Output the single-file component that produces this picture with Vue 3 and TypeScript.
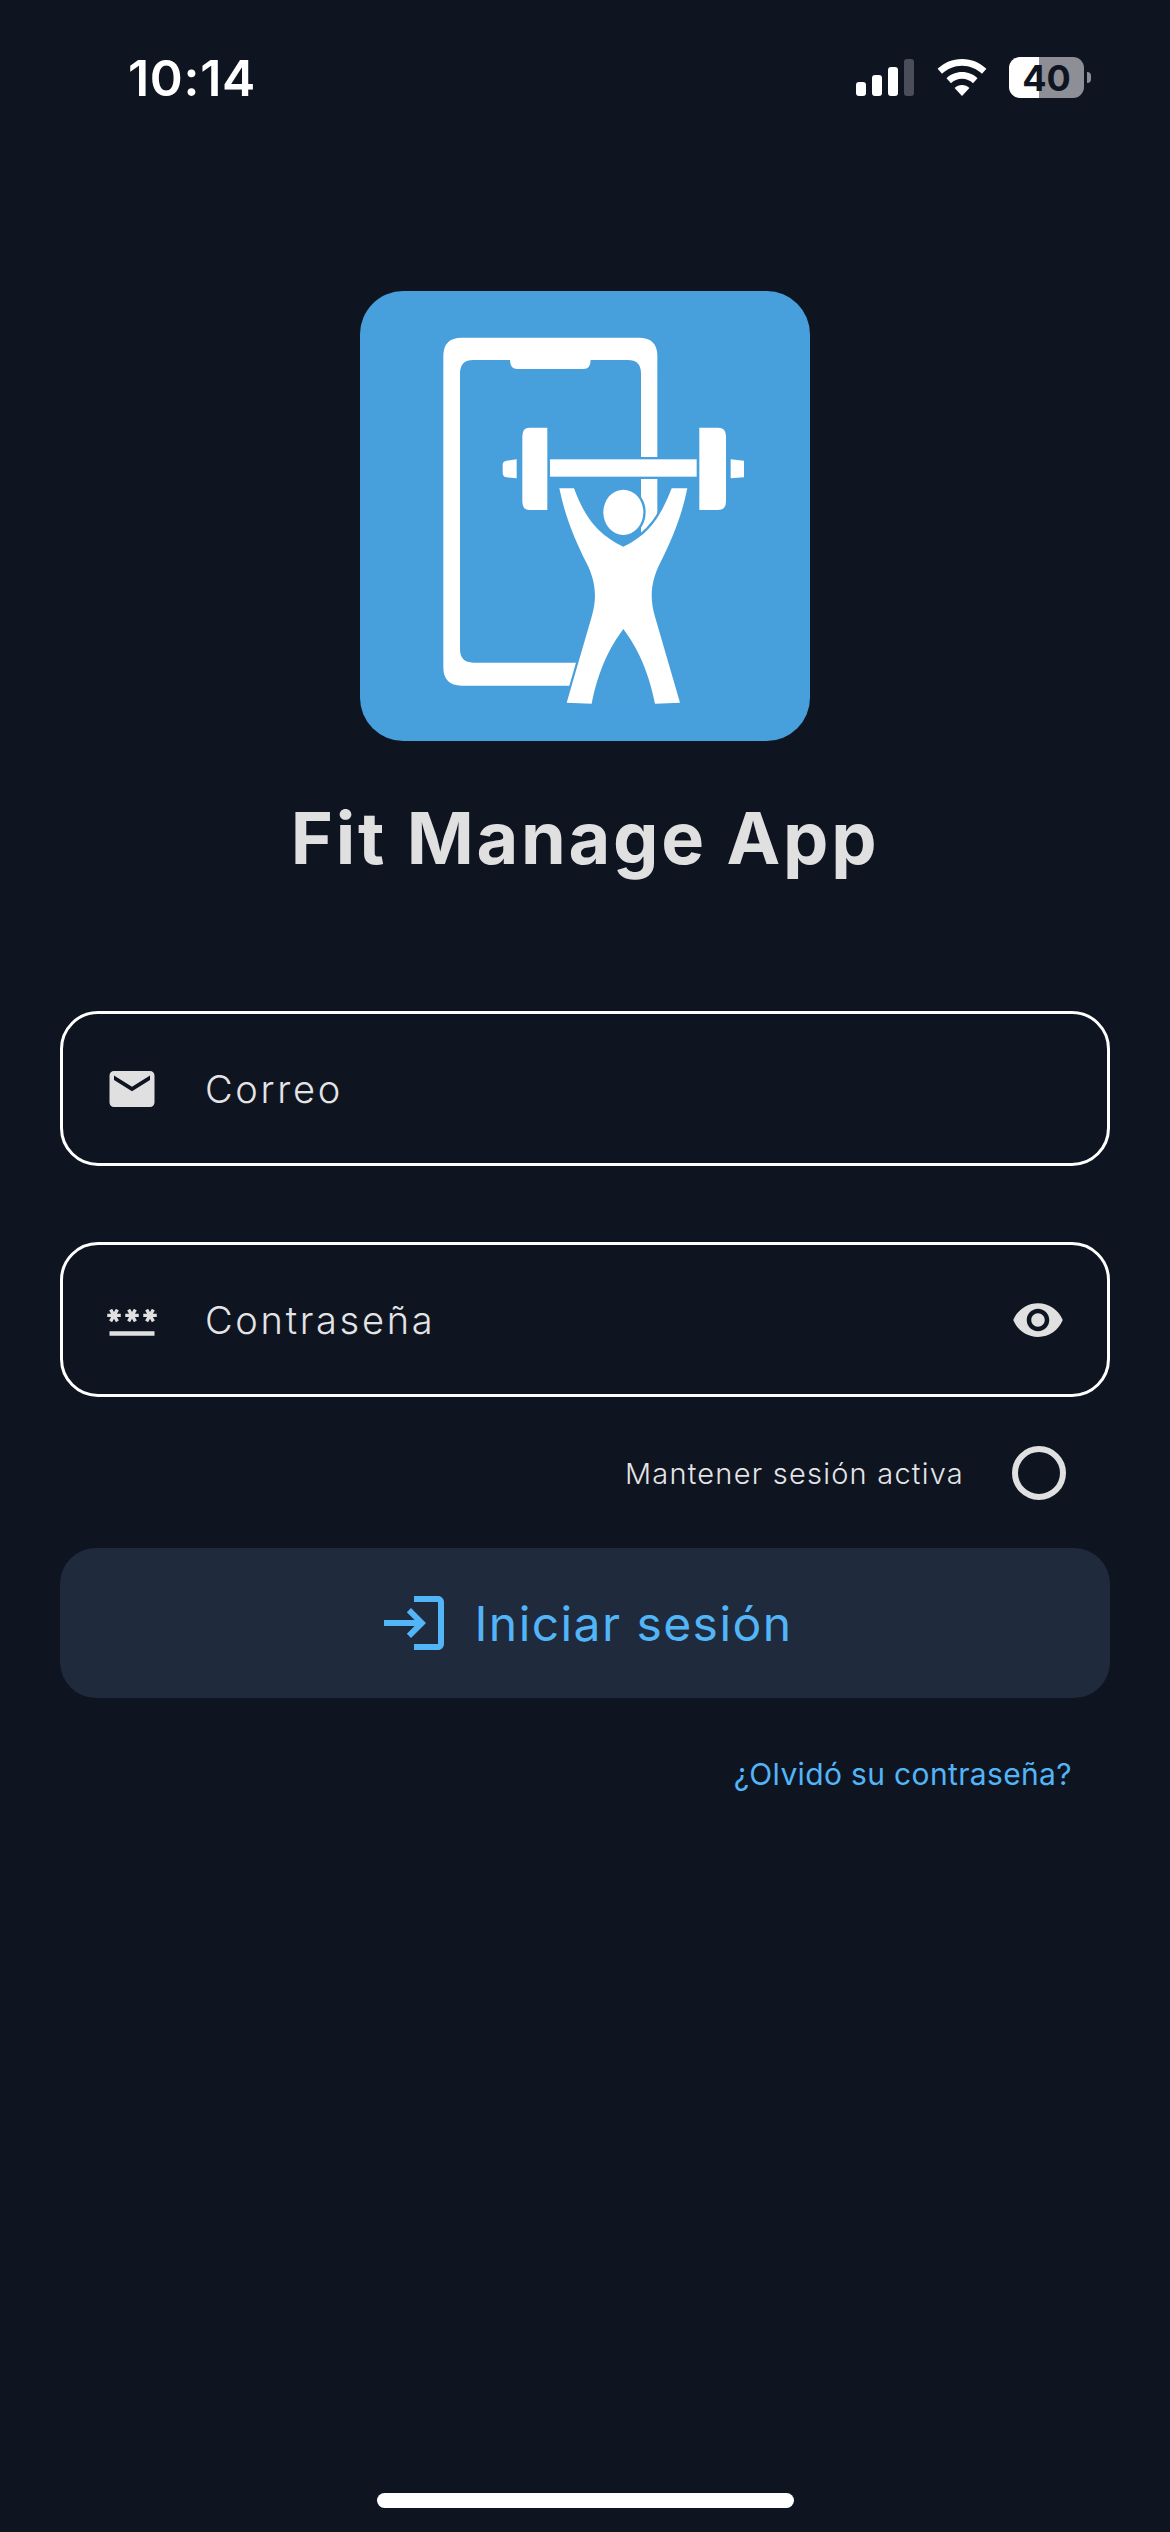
<script setup lang="ts">
const signalBars: number[] = [14, 21, 29, 37]
</script>

<template>
  <div class="page">
    <header class="status">
      <span class="time">10:14</span>
      <div class="status-icons">
        <div class="signal">
          <i v-for="(h, idx) in signalBars" :key="h" :class="{ dim: idx === 3 }" :style="{ height: h + 'px' }"></i>
        </div>
        <svg class="wifi" width="50" height="37" viewBox="0 0 50 37">
          <path d="M25 0C15.500 0 7 3.700.6 9.800l4.400 5C10.300 9.800 17.300 6.800 25 6.800s14.700 3 20 8l4.400-5C43 3.700 34.500 0 25 0z" fill="#fff"/>
          <path d="M25 13c-6 0-11.400 2.300-15.500 6.200l4.500 5c2.900-2.700 6.800-4.400 11-4.400s8.100 1.700 11 4.400l4.500-5C36.400 15.300 31 13 25 13z" fill="#fff"/>
          <path d="M25 26c-2.900 0-5.500 1.100-7.400 3L25 37l7.400-8c-1.900-1.900-4.500-3-7.400-3z" fill="#fff"/>
        </svg>
        <div class="battery">
          <div class="cell"><span>40</span></div>
          <div class="nub"></div>
        </div>
      </div>
    </header>

    <div class="logo">
      <svg width="450" height="450" viewBox="60 63 1350 1350">
        <rect x="60" y="63" width="1350" height="1350" rx="130" fill="#479fdc"/>
        <path fill="#fff" fill-rule="evenodd" d="M365 203H897Q952 203 952 258V1192Q952 1247 897 1247H365Q310 1247 310 1192V258Q310 203 365 203ZM400 270Q360 270 360 310V1138Q360 1178 400 1178H863Q903 1178 903 1138V310Q903 270 863 270H752Q752 297 730 297H532Q510 297 510 270Z"/>
        <rect x="900" y="790" width="60" height="330" fill="#479fdc"/>
        <path d="M915 1247H970V1150H880Q895 1178 915 1247Z" fill="#479fdc"/>
        <g fill="#479fdc" stroke="#479fdc" stroke-width="14" stroke-linejoin="round">
          <rect x="547" y="473" width="75" height="247"/>
          <rect x="630" y="568" width="440" height="52"/>
          <rect x="1078" y="473" width="80" height="247"/>
          <path d="M658 655H702C730 730 765 790 850 830C935 790 965 730 995 655H1042C1025 740 995 810 960 880C930 940 930 990 945 1040L1020 1300H680L755 1040C770 990 770 940 740 880C705 810 675 740 658 655Z"/>
          <ellipse cx="850" cy="727" rx="60" ry="68"/>
        </g>
        <g fill="#fff">
          <path d="M568 473H622V720H568Q547 720 547 695V498Q547 473 568 473Z"/>
          <rect x="630" y="568" width="440" height="52"/>
          <path d="M1078 473H1134Q1158 473 1158 498V695Q1158 720 1134 720H1078Z"/>
          <path d="M530 568V625L500 622Q488 620 488 608V585Q488 573 500 572Z"/>
          <path d="M1172 568L1212 572V622L1172 625Z"/>
          <path d="M658 655H702C730 730 765 790 850 830C935 790 965 730 995 655H1042C1025 740 995 810 960 880C930 940 930 990 945 1040L1020 1298L945 1301C925 1200 890 1130 850 1077C810 1130 775 1200 755 1301L680 1298L755 1040C770 990 770 940 740 880C705 810 675 740 658 655Z"/>
          <ellipse cx="850" cy="727" rx="60" ry="68"/>
        </g>
      </svg>
    </div>

    <h1 class="title">Fit Manage App</h1>

    <div class="form">
      <div class="field">
        <svg class="icon" width="54" height="54" viewBox="0 0 24 24">
          <path d="M20 4H4c-1.100 0-1.990.9-1.990 2L2 18c0 1.100.9 2 2 2h16c1.100 0 2-.9 2-2V6c0-1.100-.9-2-2-2zm0 4l-8 5-8-5V6l8 5 8-5v2z"/>
        </svg>
        <span class="label">Correo</span>
      </div>
      <div class="field second">
        <svg class="icon" width="54" height="54" viewBox="0 0 24 24">
          <path d="M2 17h20v2H2v-2zm1.150-4.050L4 11.470l.85 1.480 1.300-.75-.85-1.480H7v-1.500H5.300l.85-1.470L4.850 7 4 8.470 3.150 7l-1.300.75.85 1.470H1v1.500h1.700l-.85 1.480 1.300.75zm6.700-.75 1.300.75.85-1.480.85 1.480 1.300-.75-.85-1.480H15v-1.500h-1.700l.85-1.470-1.300-.75L12 8.470 11.150 7l-1.300.75.85 1.470H9v1.500h1.700l-.85 1.480zM23 9.220h-1.700l.85-1.470-1.300-.75L20 8.470 19.150 7l-1.300.75.85 1.470H17v1.500h1.700l-.85 1.480 1.300.75.85-1.480.85 1.480 1.300-.75-.85-1.480H23v-1.500z"/>
        </svg>
        <span class="label">Contraseña</span>
        <svg class="icon eye" width="54" height="54" viewBox="0 0 24 24">
          <path d="M12 4.500C7 4.500 2.730 7.610 1 12c1.730 4.390 6 7.500 11 7.500s9.270-3.110 11-7.500c-1.730-4.390-6-7.500-11-7.500zM12 17c-2.760 0-5-2.240-5-5s2.240-5 5-5 5 2.240 5 5-2.240 5-5 5zm0-8c-1.660 0-3 1.340-3 3s1.340 3 3 3 3-1.340 3-3-1.340-3-3-3z"/>
        </svg>
      </div>

      <div class="keep">
        <span>Mantener sesión activa</span>
        <div class="radio"></div>
      </div>

      <button class="submit" type="button">
        <svg width="72" height="72" viewBox="0 0 24 24">
          <path d="M11 7L9.600 8.400l2.600 2.600H2v2h10.200l-2.600 2.600L11 17l5-5-5-5zm9 12h-8v2h8c1.100 0 2-.9 2-2V5c0-1.100-.9-2-2-2h-8v2h8v14z"/>
        </svg>
        <span>Iniciar sesión</span>
      </button>

      <a class="forgot">¿Olvidó su contraseña?</a>
    </div>

    <div class="home"></div>
  </div>
</template>

<style scoped>
.page {
  width: 1170px;
  height: 2532px;
  background: #0f1421;
  display: flex;
  flex-direction: column;
  align-items: center;
  font-family: Inter, "Noto Sans", sans-serif;
  color: #e0e0e0;
  overflow: hidden;
}
.status {
  width: 100%;
  box-sizing: border-box;
  height: 154px;
  padding: 57px 79px 0 128px;
  display: flex;
  justify-content: space-between;
  align-items: flex-start;
}
.time {
  font-size: 50px;
  font-weight: 600;
  line-height: 42px;
  color: #fff;
  letter-spacing: 0.7px;
}
.status-icons {
  display: flex;
  align-items: center;
  height: 41px;
}
.signal {
  display: flex;
  align-items: flex-end;
  gap: 6px;
  height: 37px;
  margin-right: 23px;
}
.signal i {
  display: block;
  width: 10px;
  border-radius: 3px;
  background: #fff;
}
.signal i.dim {
  background: #4a4e5a;
}
.wifi {
  margin-right: 22px;
}
.battery {
  display: flex;
  align-items: center;
  gap: 3px;
}
.cell {
  width: 75px;
  height: 41px;
  border-radius: 11px;
  background: linear-gradient(90deg, #fff 0 40%, #8e8f96 40% 100%);
  display: flex;
  align-items: center;
  justify-content: center;
  font-size: 36px;
  font-weight: 700;
  color: #0f1421;
  line-height: 1;
}
.nub {
  width: 4px;
  height: 11px;
  border-radius: 0 6px 6px 0;
  background: #8e8f96;
}
.logo {
  margin-top: 137px;
  height: 450px;
  width: 450px;
  display: block;
}
.logo svg {
  display: block;
}
.title {
  margin: 50px 0 0;
  font-size: 72px;
  line-height: 94px;
  font-weight: 700;
  letter-spacing: 2.7px;
  color: #e0e0e0;
}
.form {
  width: 1050px;
  margin-top: 126px;
  display: flex;
  flex-direction: column;
}
.field {
  box-sizing: border-box;
  height: 155px;
  border: 3px solid #fff;
  border-radius: 38px;
  display: flex;
  align-items: center;
  padding: 0 42px;
}
.field.second {
  margin-top: 76px;
}
.icon {
  fill: #e0e0e0;
  flex: none;
}
.label {
  margin-left: 46px;
  font-size: 38px;
  font-weight: 300;
  letter-spacing: 2.7px;
  color: #e4e4e6;
}
.eye {
  margin-left: auto;
}
.keep {
  display: flex;
  justify-content: flex-end;
  align-items: center;
  height: 54px;
  margin-top: 49px;
  padding-right: 44px;
  font-size: 29px;
  font-weight: 300;
  letter-spacing: 1.23px;
  color: #e4e4e6;
}
.radio {
  box-sizing: border-box;
  width: 54px;
  height: 54px;
  margin-left: 48px;
  border: 6px solid #e0e0e0;
  border-radius: 50%;
}
.submit {
  margin-top: 48px;
  height: 150px;
  border: 0;
  border-radius: 36px;
  background: #1f2a3d;
  display: flex;
  align-items: center;
  justify-content: center;
  gap: 25px;
  font-family: inherit;
  font-size: 48px;
  font-weight: 400;
  letter-spacing: 1.43px;
  color: #52b5f7;
  padding: 0;
}
.submit svg {
  fill: #52b5f7;
}
.forgot {
  align-self: flex-end;
  margin-top: 56px;
  margin-right: 38px;
  font-size: 30px;
  line-height: 40px;
  letter-spacing: 0.35px;
  color: #52b5f7;
}
.home {
  margin-top: auto;
  margin-bottom: 24px;
  width: 417px;
  height: 15px;
  border-radius: 8px;
  background: #fff;
}
</style>
